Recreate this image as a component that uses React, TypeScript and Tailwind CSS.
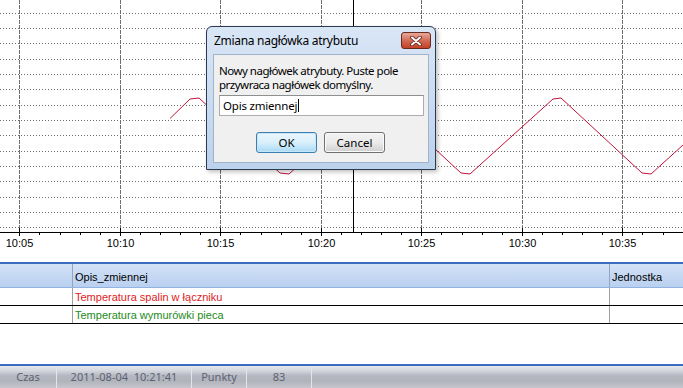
import React from 'react';

const AXIS_Y = 232.5;
const hLines = Array.from({ length: 15 }, (_, i) => Math.round(12.7 + i * 15.33) + 0.5);
const majors = Array.from({ length: 7 }, (_, i) => Math.round(19.3 + i * 100.5) + 0.5);
const minors = Array.from({ length: 36 }, (_, i) => Math.round(19.3 + (i - 1) * 20.1) + 0.5);
const labels = ['10:05', '10:10', '10:15', '10:20', '10:25', '10:30', '10:35'];
const trend =
  '170,118.5 190,99 199,98 280,173 289,174 372,99 380,98 461,173 470,174 553,99 561,98 642,173 651,174 683,145';

const uiFont = { fontFamily: '"Noto Sans", "Open Sans", sans-serif' };

const Chart: React.FC = () => (
  <svg width={683} height={262} className="block shrink-0" style={{ fontFamily: '"Liberation Sans", Arial, sans-serif' }}>
    <rect width={683} height={262} fill="#ffffff" />
    {hLines.map((y) => (
      <line key={y} x1={0} x2={683} y1={y} y2={y} stroke="#6e6e6e" strokeDasharray="1 2" />
    ))}
    {majors.map((x) => (
      <line key={x} x1={x} x2={x} y1={0} y2={AXIS_Y} stroke="#6e6e6e" strokeDasharray="4 1" />
    ))}
    <polyline points={trend} fill="none" stroke="#c0143a" strokeWidth={1} />
    <line x1={353.5} x2={353.5} y1={0} y2={AXIS_Y} stroke="#000" />
    <line x1={0} x2={683} y1={AXIS_Y} y2={AXIS_Y} stroke="#000" />
    {minors.map((x) => (
      <line key={x} x1={x} x2={x} y1={AXIS_Y} y2={235} stroke="#000" />
    ))}
    {majors.map((x) => (
      <line key={'m' + x} x1={x} x2={x} y1={228} y2={236} stroke="#000" />
    ))}
    {labels.map((t, i) => (
      <text key={t} x={majors[i]} y={247} textAnchor="middle" fontSize={11} fill="#000">
        {t}
      </text>
    ))}
  </svg>
);

const Dialog: React.FC = () => (
  <div className="absolute left-[206px] top-[26px] w-[230px] h-[144px] flex flex-col rounded-t-[6px] border border-[#2b3a4f] bg-gradient-to-b from-[#d9e6f6] to-[#bcd2ec] shadow-[2px_2px_4px_rgba(0,0,0,0.25)]">
    {/* title bar */}
    <div className="h-[27px] flex items-center justify-between pl-[7px] pr-[4px]">
      <span className="text-[12px] tracking-[-0.3px] text-black" style={uiFont}>
        Zmiana nagłówka atrybutu
      </span>
      <div className="w-[30px] h-[17px] rounded-[3px] border border-[#6b2a1f] bg-gradient-to-b from-[#e8a898] via-[#d26a55] to-[#c2412a] flex items-center justify-center">
        <svg width={12} height={10} viewBox="0 0 12 10">
          <path d="M2 1.5 L10 8.5 M10 1.5 L2 8.5" stroke="#5a2218" strokeWidth={3.6} strokeLinecap="round" />
          <path d="M2 1.5 L10 8.5 M10 1.5 L2 8.5" stroke="#ffffff" strokeWidth={2} strokeLinecap="round" />
        </svg>
      </div>
    </div>
    {/* client */}
    <div
      className="flex-1 mx-[6px] mb-[6px] bg-[#f0f0f0] border border-[#9fb3cc] flex flex-col px-[5px] pt-[9px]"
      style={uiFont}
    >
      <p className="text-[11.5px] leading-[14px] tracking-[-0.5px] text-black">
        Nowy nagłówek atrybuty. Puste pole
        <br />
        przywraca nagłówek domyślny.
      </p>
      <div className="mt-[3px] h-[21px] w-[205px] bg-white border border-[#abadb3] border-t-[#8e8f8f] flex items-center pl-[3px] text-[11.5px] tracking-[-0.2px] text-black">
        Opis zmiennej
        <span className="inline-block w-px h-[13px] bg-black ml-px" />
      </div>
      <div className="mt-[16px] flex justify-end gap-[7px] pr-[38px]">
        <button className="w-[61px] h-[21px] rounded-[3px] border border-[#3c7fb1] bg-gradient-to-b from-[#eaf6fd] via-[#d9f0fc] to-[#a7d9f5] shadow-[inset_0_0_0_1px_#c6e6f8] text-[11.5px] text-black">
          OK
        </button>
        <button className="w-[61px] h-[21px] rounded-[3px] border border-[#707070] bg-gradient-to-b from-[#f2f2f2] via-[#ebebeb] to-[#cfcfcf] shadow-[inset_0_0_0_1px_#fbfbfb] text-[11.5px] text-black">
          Cancel
        </button>
      </div>
    </div>
  </div>
);

const Table: React.FC = () => (
  <div className="flex flex-col text-[11px]" style={{ fontFamily: '"Liberation Sans", Arial, sans-serif' }}>
    <div className="h-[24px] flex bg-gradient-to-b from-[#d3e2f6] to-[#b9d0f0] border-b border-[#93b3e2]">
      <div className="w-[73px] border-r border-[#8fa6c6]" />
      <div className="w-[537px] border-r border-[#8fa6c6] flex items-center pl-[2px] pt-[4px] text-black">Opis_zmiennej</div>
      <div className="flex-1 flex items-center pl-[2px] pt-[4px] text-black">Jednostka</div>
    </div>
    <div className="h-[18px] flex border-b border-black">
      <div className="w-[73px] border-r border-[#a0a0a0]" />
      <div className="w-[537px] border-r border-[#a0a0a0] flex items-center pl-[2px] pt-px text-[#e01b24]">
        Temperatura spalin w łączniku
      </div>
      <div className="flex-1" />
    </div>
    <div className="h-[18px] flex border-b border-black">
      <div className="w-[73px] border-r border-[#a0a0a0]" />
      <div className="w-[537px] border-r border-[#a0a0a0] flex items-center pl-[2px] pt-px text-[#228b22]">
        Temperatura wymurówki pieca
      </div>
      <div className="flex-1" />
    </div>
  </div>
);

const StatusBar: React.FC = () => {
  const cells = [
    { t: 'Czas', w: 'w-[57px]' },
    { t: '2011-08-04  10:21:41', w: 'w-[135px]' },
    { t: 'Punkty', w: 'w-[55px]' },
    { t: '83', w: 'w-[65px]' },
  ];
  return (
    <div
      className="h-[22px] flex bg-[linear-gradient(to_bottom,#e6e7ec_0%,#d6d8df_20%,#b3b6c0_45%,#b2b4bd_70%,#c6c7cc_100%)] text-[11px] text-[#5c6270]"
      style={uiFont}
    >
      {cells.map((c) => (
        <div key={c.t} className={`${c.w} flex items-center justify-center whitespace-pre border-r border-[#e4e5ea]`}>
          {c.t}
        </div>
      ))}
      <div className="flex-1" />
    </div>
  );
};

export default function App() {
  return (
    <div className="relative w-[683px] h-[388px] overflow-hidden bg-white flex flex-col">
      <Chart />
      <div className="h-[2px] bg-[#3a6cc0] shrink-0" />
      <Table />
      <div className="flex-1 bg-white" />
      <div className="h-[2px] bg-[#3a6cc0] shrink-0" />
      <StatusBar />
      <Dialog />
    </div>
  );
}
